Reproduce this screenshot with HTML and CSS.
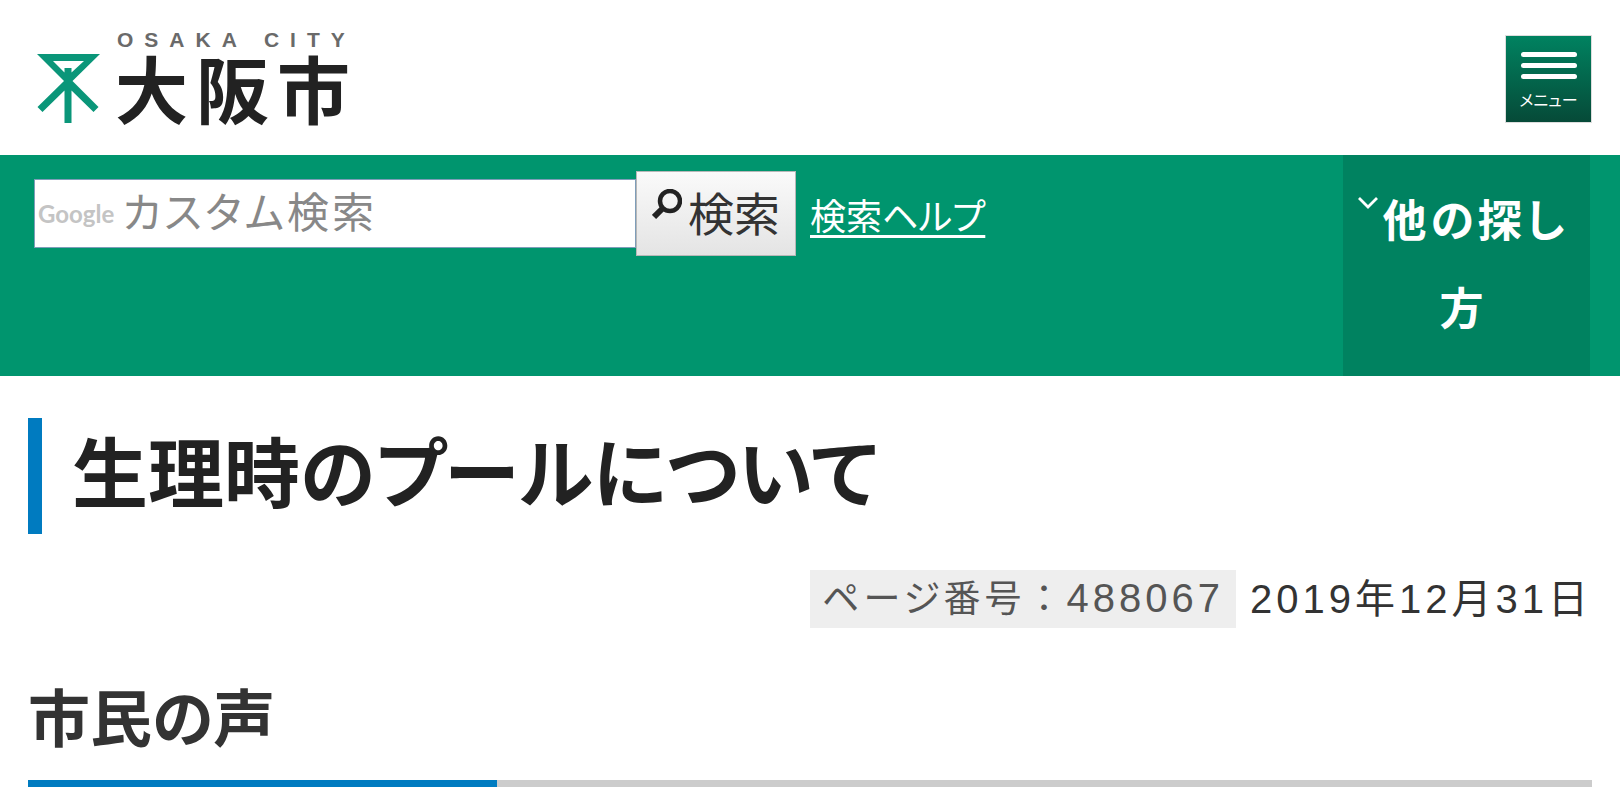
FILE: index.html
```html
<!DOCTYPE html>
<html lang="ja">
<head>
<meta charset="utf-8">
<meta name="viewport" content="width=device-width, initial-scale=1">
<title>大阪市:生理時のプールについて</title>
<link rel="stylesheet" href="styles.css">
</head>
<body>
<header class="header">
  <a class="logo" href="#">
    <svg class="logo-mark" viewBox="0 0 64 70" aria-hidden="true">
      <path d="M0 1H63L35.500 28 61.500 54 56.500 59 34.500 37.500V70H27.500V37.500L5.500 59 .500 54 27 28ZM16 8L27.500 19.500V15H34.500V19.500L47 8Z" fill="#0a9679" fill-rule="evenodd"/>
    </svg>
    <span class="logo-text">
      <span class="logo-en">OSAKA CITY</span>
      <span class="logo-ja">大阪市</span>
    </span>
  </a>
  <button class="menu" type="button">
    <span class="menu-bar"></span>
    <span class="menu-bar"></span>
    <span class="menu-bar"></span>
    <span class="menu-label">メニュー</span>
  </button>
</header>
<div class="band">
  <form class="search" role="search">
    <div class="search-box">
      <label class="search-brand" for="q">Google</label>
      <input class="search-input" id="q" type="text" placeholder="カスタム検索">
    </div>
    <button class="search-button" type="button">
      <svg class="search-icon" viewBox="0 0 30 32" aria-hidden="true">
        <circle cx="18" cy="12" r="10" fill="none" stroke="#222" stroke-width="4.500"/>
        <path d="M11 19L2 28" stroke="#222" stroke-width="6"/>
      </svg>
      <span>検索</span>
    </button>
    <a class="help" href="#">検索ヘルプ</a>
  </form>
  <button class="other" type="button"><svg class="chevron" viewBox="0 0 20 12" aria-hidden="true"><path d="M1 1L10 10 19 1" fill="none" stroke="#fff" stroke-width="2.800"/></svg>他の探し方</button>
</div>
<main class="main">
  <h1 class="title">生理時のプールについて</h1>
  <p class="meta"><span class="page-number"><span class="page-label">ページ番号<span class="colon">：</span></span>488067</span><span>2019年12月31日</span></p>
  <h2 class="section-title">市民の声</h2>
</main>
</body>
</html>
```
FILE: styles.css
```css
* { box-sizing: border-box; }
body {
  margin: 0;
  background: #fff;
  color: #333;
  font-family: "Liberation Sans", "Noto Sans CJK JP", sans-serif;
  font-size: 40px;
  font-feature-settings: "palt";
}
button, input { font: inherit; font-feature-settings: inherit; color: inherit; }
button { cursor: pointer; }

.header {
  display: flex;
  justify-content: space-between;
  align-items: flex-start;
  min-height: 155px;
  padding: 30px 28px 0 37px;
}
.logo { display: flex; align-items: flex-end; gap: 14px; color: #222; text-decoration: none; }
.logo-mark { width: 64px; height: 70px; }
.logo-text { display: flex; flex-direction: column; }
.logo-en { padding-left: 2px; font-size: 21px; line-height: 20px; font-weight: 700; letter-spacing: 11px; color: #6a6a6a; }
.logo-ja {
  font-family: "Noto Sans CJK JP", sans-serif;
  font-size: 73px;
  line-height: 73px;
  font-weight: 700;
  letter-spacing: 8px;
  font-feature-settings: normal;
}

.menu {
  display: flex;
  flex-direction: column;
  align-items: center;
  gap: 6px;
  width: 87px;
  height: 88px;
  margin-top: 5px;
  padding: 16px 0 0;
  border: 1px solid #ddd;
  background: linear-gradient(#008260, #064a38);
  color: #fff;
}
.menu-bar { width: 56px; height: 5px; border-radius: 3px; background: #fff; }
.menu-label { font-size: 16px; line-height: 20px; font-weight: 400; margin-top: 6px; }

.band {
  display: flex;
  justify-content: space-between;
  align-items: stretch;
  padding: 0 30px 0 34px;
  background: #00956e;
}
.search { display: flex; align-items: center; align-self: flex-start; padding-top: 16px; }
.search-box {
  display: flex;
  align-items: center;
  width: 602px;
  height: 69px;
  border: 1px solid #7e9db9;
  background: #fff;
}
.search-brand { padding-left: 3px; font-family: Lato, sans-serif; font-size: 24px; font-weight: 700; color: #c4c4c4; }
.search-input {
  flex: 1;
  min-width: 0;
  height: 66px;
  padding: 0 0 0 8px;
  border: 0;
  outline: 0;
  background: transparent;
  font-size: 42px;
  letter-spacing: 3px;
}
.search-input::placeholder { color: #888; opacity: 1; }
.search-button {
  display: flex;
  align-items: center;
  gap: 6px;
  height: 85px;
  padding: 0 15px 6px;
  border: 1px solid #b8b8b8;
  background: linear-gradient(#fafafa, #e4e4e4);
  font-size: 46px;
}
.search-icon { width: 30px; height: 32px; margin-bottom: 12px; }
.help { margin-left: 14px; color: #fff; font-size: 36px; text-decoration-thickness: 3px; text-underline-offset: 5px; }

.other {
  width: 247px;
  padding: 23px 16px 22px 10px;
  border: 0;
  background: #008260;
  color: #fff;
  font-size: 44px;
  line-height: 88px;
  font-weight: 700;
  letter-spacing: 4px;
  text-align: center;
}
.chevron { width: 20px; height: 12px; margin-right: 4px; vertical-align: 28px; }

.main { padding: 42px 28px 0; }
.title {
  margin: 0;
  padding-left: 30px;
  border-left: 14px solid #007bc0;
  color: #222;
  font-size: 76px;
  line-height: 116px;
  font-weight: 700;
}
.meta {
  display: flex;
  justify-content: flex-end;
  align-items: center;
  gap: 14px;
  margin: 36px 0 0;
  line-height: 57px;
  letter-spacing: 4px;
}
.page-number { padding: 0 12px; background: #eee; color: #555; }
.page-label { font-size: 37px; }
.colon { font-feature-settings: normal; }
.section-title {
  margin: 38px 0 0;
  padding-top: 17px;
  font-size: 62px;
  line-height: 76px;
  font-weight: 700;
}
.section-title::after {
  content: "";
  display: block;
  height: 7px;
  margin-top: 21px;
  background: linear-gradient(to right, #007bc0 30%, #ccc 30%);
}
```
